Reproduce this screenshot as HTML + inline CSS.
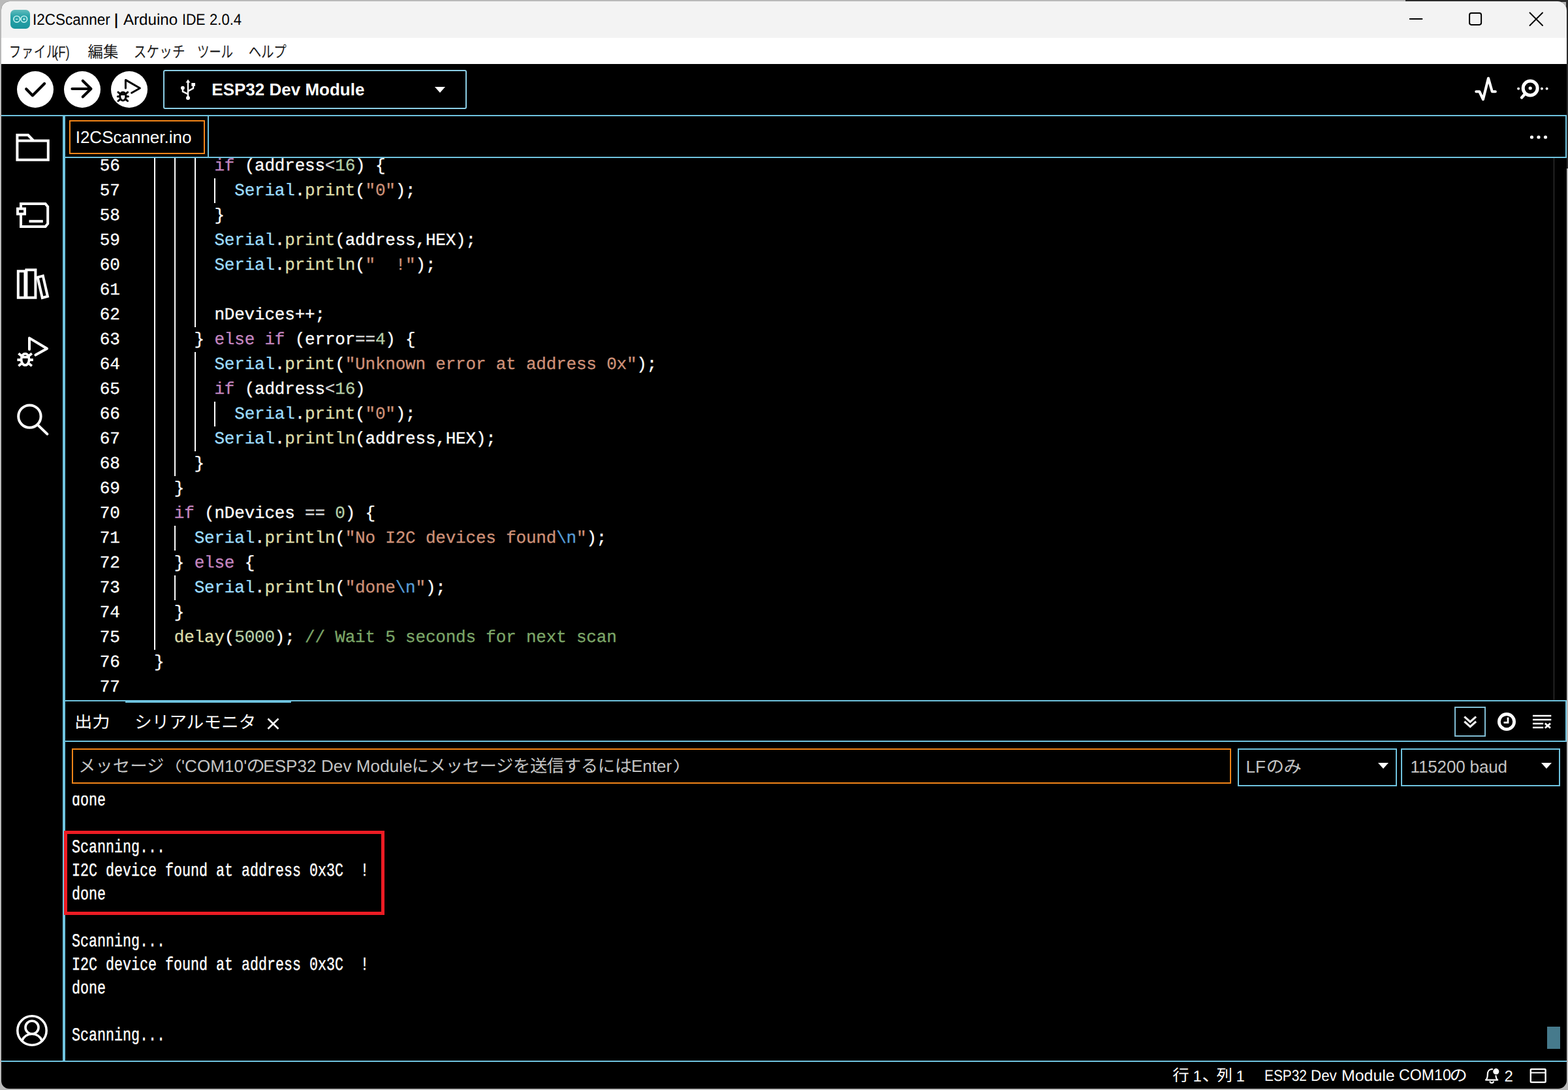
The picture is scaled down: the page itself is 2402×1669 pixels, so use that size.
<!DOCTYPE html>
<html lang="ja"><head><meta charset="utf-8"><title>I2CScanner | Arduino IDE 2.0.4</title>
<style>
html,body{margin:0;padding:0}
body{width:2402px;height:1669px;overflow:hidden;background:#b9b9b9;text-rendering:geometricPrecision;font-family:"Liberation Sans",sans-serif;position:relative}
#bgr{position:absolute;left:2153px;top:0;width:249px;height:3px;background:#2b2b2b}
#bgr2{position:absolute;left:2399px;top:0;width:3px;height:258px;background:#2b2b2b}
#win{position:absolute;left:2px;top:2px;width:2398px;height:1665px;border-radius:13px 14px 13px 12px;overflow:hidden;background:#000}
#in{position:absolute;left:-2px;top:-2px;width:2402px;height:1669px}
#in div,#in span.a,#in svg{position:absolute}
.b{background:#6FC3DF}
.t{white-space:pre;line-height:1}
svg{overflow:visible}
svg.jp text{font-family:"Liberation Sans","Noto Sans CJK JP",sans-serif;font-size:1000px}
#title{left:0;top:0;width:2402px;height:58px;background:#f3f3f3}
#menu{left:0;top:58px;width:2402px;height:40px;background:#fff}
#code{left:100px;top:242px;width:2298px;height:830px;overflow:hidden}
#code .ln,#code .cl{font-family:"Liberation Mono",monospace;font-size:26px;letter-spacing:-0.2px;-webkit-text-stroke:0.3px;line-height:38px;height:38px;white-space:pre;color:#fff}
#code .ln{left:0;width:83.6px;text-align:right}
#code .cl{left:136px}
#code .g{width:2px;background:#fff}
.k{color:#C586C0}.v{color:#9CDCFE}.f{color:#DCDCAA}.s{color:#CE9178}.n{color:#B5CEA8}.c{color:#7CA668}.e{color:#569CD6}.o{color:#D4D4D4}
#outp{left:100px;top:1218px;width:2290px;height:404px;overflow:hidden}
#outp pre{position:absolute;left:9.6px;top:-8.7px;-webkit-text-stroke:0.4px;margin:0;font-family:"Liberation Mono",monospace;font-size:28px;line-height:36px;color:#fff;transform:scaleX(0.7738);transform-origin:0 0}
</style></head>
<body>
<div id="bgr"></div><div id="bgr2"></div>
<div id="win"><div id="in">
<div id="title"></div>
<div id="menu"></div>
<svg style="left:16px;top:15px" width="30" height="29" viewBox="0 0 30 29"><defs><linearGradient id="ag" x1="0" y1="0" x2="0" y2="1"><stop offset="0" stop-color="#62bcbd"/><stop offset="0.35" stop-color="#2aa3a8"/><stop offset="1" stop-color="#1a959d"/></linearGradient></defs><rect width="30" height="29" rx="6.5" fill="url(#ag)"/><g fill="none" stroke="#c4f1f0" stroke-width="1.700"><circle cx="9.700" cy="14.300" r="4.800"/><circle cx="20.800" cy="14.300" r="4.800"/></g><path d="M8 14.300h3.400M19.100 14.300h3.400M20.800 12.600v3.400" stroke="#c4f1f0" stroke-width="1.300" fill="none"/></svg>
<span class="a t" style="left:49.73px;top:18.58px;font-size:24px;color:#000;font-weight:normal;transform:scaleX(0.9362);transform-origin:0 0">I2CScanner</span><span class="a t" style="left:174.14px;top:18.58px;font-size:24px;color:#000;font-weight:normal;transform:scaleX(1.2851);transform-origin:0 0">|</span><span class="a t" style="left:189.15px;top:18.58px;font-size:24px;color:#000;font-weight:normal;transform:scaleX(1.0041);transform-origin:0 0">Arduino</span><span class="a t" style="left:278.54px;top:18.58px;font-size:24px;color:#000;font-weight:normal;transform:scaleX(0.8868);transform-origin:0 0">IDE</span><span class="a t" style="left:320.89px;top:18.58px;font-size:24px;color:#000;font-weight:normal;transform:scaleX(0.9190);transform-origin:0 0">2.0.4</span>
<svg style="left:2140px;top:10px" width="240" height="40" viewBox="2140 10 240 40" fill="none" stroke="#000" stroke-width="2"><path d="M2159 28.900h20.200"/><rect x="2251.100" y="20.100" width="18" height="17.800" rx="2.800"/><path stroke-width="1.900" stroke-linecap="round" d="M2343.500 19.500l19.500 19.500M2363 19.500l-19.500 19.500"/></svg>
<svg class="jp" style="left:15px;top:67px;width:65px;height:24px" viewBox="60 -880 3427 1000" preserveAspectRatio="none"><text x="0" y="0" fill="#1b1b1b">ファイル</text></svg><svg class="jp" style="left:83.4px;top:67px;width:23.6px;height:24px" viewBox="92 -880 1044 1000" preserveAspectRatio="none"><text x="92" y="0" fill="#1b1b1b" textLength="1044" lengthAdjust="spacingAndGlyphs">(F)</text></svg><svg class="jp" style="left:135.2px;top:67px;width:46px;height:24px" viewBox="26 -880 1942 1000" preserveAspectRatio="none"><text x="0" y="0" fill="#1b1b1b">編集</text></svg><svg class="jp" style="left:206.3px;top:67px;width:69px;height:24px" viewBox="60 -880 3501 1000" preserveAspectRatio="none"><text x="0" y="0" fill="#1b1b1b">スケッチ</text></svg><svg class="jp" style="left:303.4px;top:67px;width:50px;height:24px" viewBox="60 -880 2723 1000" preserveAspectRatio="none"><text x="0" y="0" fill="#1b1b1b">ツール</text></svg><svg class="jp" style="left:381.5px;top:67px;width:55px;height:24px" viewBox="60 -880 2866 1000" preserveAspectRatio="none"><text x="0" y="0" fill="#1b1b1b">ヘルプ</text></svg>
<div style="left:26px;top:109px;width:56px;height:56px;border-radius:50%;background:#fff"></div>
<div style="left:98px;top:109px;width:56px;height:56px;border-radius:50%;background:#fff"></div>
<div style="left:170px;top:109px;width:56px;height:56px;border-radius:50%;background:#fff"></div>
<svg style="left:26px;top:109px" width="200" height="56" viewBox="26 109 200 56" fill="none" stroke="#000" stroke-width="4.2" stroke-linecap="round" stroke-linejoin="round"><path d="M40.2 136.2l9.7 10 18.2-18.2"/><path d="M110.5 136h28.6M126.8 123.8l12.6 12.2-12.6 12.2"/><g stroke-width="3"><path d="M192.4 135v-12.6l22 12.6-12.8 7.3"/><ellipse cx="188.3" cy="147.6" rx="4.6" ry="6.3"/><path d="M183.9 144.6h8.8M180.3 147.8h3.4M193 147.8h3.4M181 141.2l3.2 2.4M195.6 141.2l-3.2 2.4M181 154.6l3.2-2.6M195.6 154.6l-3.2-2.6"/></g></svg>
<div style="left:250px;top:107px;width:461px;height:56px;border:2px solid #8ccfe6;border-radius:3px;"></div>
<svg style="left:276px;top:118px" width="26" height="38" viewBox="276 118 26 38" fill="none" stroke="#fff" stroke-width="2.4" stroke-linejoin="round"><path d="M288 125V149M279.900 135V140.200L288 144.200M296.100 131V135.100L288 139.600"/><path d="M284.600 126.400L288 121.600 291.400 126.400z" fill="#fff" stroke="none"/><circle cx="288" cy="150.100" r="3" fill="#fff" stroke="none"/><circle cx="279.900" cy="134.600" r="2.900" fill="#fff" stroke="none"/><rect x="293.300" y="127" width="5.700" height="4.800" fill="#fff" stroke="none"/></svg>
<span class="a t" style="left:324.3px;top:123.99px;font-size:26px;color:#fff;font-family:'Liberation Sans',sans-serif;letter-spacing:0px;font-weight:bold;">ESP32 Dev Module</span>
<svg style="left:666px;top:133px" width="16" height="9" viewBox="0 0 16 9"><path d="M0 0h16l-8 9z" fill="#fff"/></svg>
<svg style="left:2255px;top:114px" width="125" height="44" viewBox="2255 114 125 44" fill="none" stroke="#fff" stroke-linecap="round" stroke-linejoin="round"><path stroke-width="4.100" d="M2261.300 140.200h5l5.600 12 8.100-32.400 5.800 20.400h5"/><circle cx="2344.2" cy="135" r="11" stroke-width="5"/><circle cx="2344.2" cy="135" r="2.6" fill="#fff" stroke="none"/><path stroke-width="4.400" d="M2335.4 144.600l-4.400 4.800"/><g fill="#fff" stroke="none"><circle cx="2326.100" cy="135.800" r="2"/><circle cx="2361.900" cy="135.800" r="2"/><circle cx="2369.600" cy="135.800" r="2"/></g></svg>
<div class="b" style="left:0px;top:176px;width:2402px;height:2px;"></div>
<div class="b" style="left:96px;top:178px;width:4px;height:1446px;"></div>
<div class="b" style="left:2398px;top:176px;width:2px;height:66px;"></div>
<div class="b" style="left:100px;top:240px;width:2300px;height:2px;"></div>
<div class="b" style="left:318px;top:178px;width:2px;height:62px;"></div>
<div style="left:106px;top:184px;width:204px;height:48px;border:2px solid #F38518;"></div>
<span class="a t" style="left:115.7px;top:196.99px;font-size:26px;color:#fff;font-family:'Liberation Sans',sans-serif;letter-spacing:0px;font-weight:normal;">I2CScanner.ino</span>
<svg style="left:2340px;top:204px" width="34" height="12" viewBox="2340 204 34 12" fill="#fff"><circle cx="2346.5" cy="210" r="2.6"/><circle cx="2357" cy="210" r="2.6"/><circle cx="2367.5" cy="210" r="2.6"/></svg>
<svg style="left:20px;top:200px" width="60" height="480" viewBox="20 200 60 480" fill="none" stroke="#fff" stroke-width="4" stroke-linejoin="miter"><path d="M26.4 215.5h47.4v29.2h-47.4zM26.4 217v-10.2h16.6l8.4 8.700"/><path d="M32 318v-6h37.5l3.700 4.500v26l-3.700 4.500h-37.500v-18"/><rect x="27" y="319.6" width="11" height="8"/><path d="M44.500 338.800h21.300"/><path d="M27.800 415.200h10.600v40.600h-10.600zM40.400 413.200h14v42.600h-14z"/><path d="M57.600 424.600l8.200-2.200 7.200 31.400-8.200 2.200z"/><path d="M45 535v-17.400l27 16.200-17.600 9.800" stroke-linejoin="round" stroke-linecap="round"/><g stroke-width="3.8" stroke-linecap="butt"><ellipse cx="38.600" cy="550.400" rx="6" ry="8.800"/><path d="M32.400 546.800h12.400M26.400 551h5M45.800 551h5M28.400 541.200l4.400 3.600M48.800 541.200l-4.400 3.600M28.400 560.400l4.400-3.600M48.800 560.400l-4.400-3.600"/></g><circle cx="45.400" cy="637.600" r="17.200"/><path d="M57.800 650.600l14.600 14" stroke-linecap="round"/></svg>
<svg style="left:22px;top:1551px" width="54" height="54" viewBox="22 1551 54 54" fill="none" stroke="#fff" stroke-width="3.6"><circle cx="49" cy="1578" r="22.200"/><circle cx="49" cy="1573.200" r="10"/><path d="M33.600 1593.400c3-6.600 9-10.200 15.400-10.200s12.400 3.600 15.400 10.200"/></svg>
<div id="code">
<div class="ln" style="top:-6.8px">56</div><div class="cl" style="top:-6.8px">      <span class="k">if</span> (address<span class="o">&lt;</span><span class="n">16</span>) {</div><div class="g" style="left:136.0px;top:-6.8px;height:38px"></div><div class="g" style="left:166.8px;top:-6.8px;height:38px"></div><div class="g" style="left:197.6px;top:-6.8px;height:38px"></div>
<div class="ln" style="top:31.2px">57</div><div class="cl" style="top:31.2px">        <span class="v">Serial</span>.<span class="f">print</span>(<span class="s">&quot;0&quot;</span>);</div><div class="g" style="left:136.0px;top:31.2px;height:38px"></div><div class="g" style="left:166.8px;top:31.2px;height:38px"></div><div class="g" style="left:197.6px;top:31.2px;height:38px"></div><div class="g" style="left:228.4px;top:31.2px;height:38px"></div>
<div class="ln" style="top:69.2px">58</div><div class="cl" style="top:69.2px">      }</div><div class="g" style="left:136.0px;top:69.2px;height:38px"></div><div class="g" style="left:166.8px;top:69.2px;height:38px"></div><div class="g" style="left:197.6px;top:69.2px;height:38px"></div>
<div class="ln" style="top:107.2px">59</div><div class="cl" style="top:107.2px">      <span class="v">Serial</span>.<span class="f">print</span>(address,HEX);</div><div class="g" style="left:136.0px;top:107.2px;height:38px"></div><div class="g" style="left:166.8px;top:107.2px;height:38px"></div><div class="g" style="left:197.6px;top:107.2px;height:38px"></div>
<div class="ln" style="top:145.2px">60</div><div class="cl" style="top:145.2px">      <span class="v">Serial</span>.<span class="f">println</span>(<span class="s">&quot;  !&quot;</span>);</div><div class="g" style="left:136.0px;top:145.2px;height:38px"></div><div class="g" style="left:166.8px;top:145.2px;height:38px"></div><div class="g" style="left:197.6px;top:145.2px;height:38px"></div>
<div class="ln" style="top:183.2px">61</div><div class="g" style="left:136.0px;top:183.2px;height:38px"></div><div class="g" style="left:166.8px;top:183.2px;height:38px"></div><div class="g" style="left:197.6px;top:183.2px;height:38px"></div>
<div class="ln" style="top:221.2px">62</div><div class="cl" style="top:221.2px">      nDevices++;</div><div class="g" style="left:136.0px;top:221.2px;height:38px"></div><div class="g" style="left:166.8px;top:221.2px;height:38px"></div><div class="g" style="left:197.6px;top:221.2px;height:38px"></div>
<div class="ln" style="top:259.2px">63</div><div class="cl" style="top:259.2px">    } <span class="k">else</span> <span class="k">if</span> (error<span class="o">==</span><span class="n">4</span>) {</div><div class="g" style="left:136.0px;top:259.2px;height:38px"></div><div class="g" style="left:166.8px;top:259.2px;height:38px"></div>
<div class="ln" style="top:297.2px">64</div><div class="cl" style="top:297.2px">      <span class="v">Serial</span>.<span class="f">print</span>(<span class="s">&quot;Unknown error at address 0x&quot;</span>);</div><div class="g" style="left:136.0px;top:297.2px;height:38px"></div><div class="g" style="left:166.8px;top:297.2px;height:38px"></div><div class="g" style="left:197.6px;top:297.2px;height:38px"></div>
<div class="ln" style="top:335.2px">65</div><div class="cl" style="top:335.2px">      <span class="k">if</span> (address<span class="o">&lt;</span><span class="n">16</span>)</div><div class="g" style="left:136.0px;top:335.2px;height:38px"></div><div class="g" style="left:166.8px;top:335.2px;height:38px"></div><div class="g" style="left:197.6px;top:335.2px;height:38px"></div>
<div class="ln" style="top:373.2px">66</div><div class="cl" style="top:373.2px">        <span class="v">Serial</span>.<span class="f">print</span>(<span class="s">&quot;0&quot;</span>);</div><div class="g" style="left:136.0px;top:373.2px;height:38px"></div><div class="g" style="left:166.8px;top:373.2px;height:38px"></div><div class="g" style="left:197.6px;top:373.2px;height:38px"></div><div class="g" style="left:228.4px;top:373.2px;height:38px"></div>
<div class="ln" style="top:411.2px">67</div><div class="cl" style="top:411.2px">      <span class="v">Serial</span>.<span class="f">println</span>(address,HEX);</div><div class="g" style="left:136.0px;top:411.2px;height:38px"></div><div class="g" style="left:166.8px;top:411.2px;height:38px"></div><div class="g" style="left:197.6px;top:411.2px;height:38px"></div>
<div class="ln" style="top:449.2px">68</div><div class="cl" style="top:449.2px">    }</div><div class="g" style="left:136.0px;top:449.2px;height:38px"></div><div class="g" style="left:166.8px;top:449.2px;height:38px"></div>
<div class="ln" style="top:487.2px">69</div><div class="cl" style="top:487.2px">  }</div><div class="g" style="left:136.0px;top:487.2px;height:38px"></div>
<div class="ln" style="top:525.2px">70</div><div class="cl" style="top:525.2px">  <span class="k">if</span> (nDevices <span class="o">==</span> <span class="n">0</span>) {</div><div class="g" style="left:136.0px;top:525.2px;height:38px"></div>
<div class="ln" style="top:563.2px">71</div><div class="cl" style="top:563.2px">    <span class="v">Serial</span>.<span class="f">println</span>(<span class="s">&quot;No I2C devices found</span><span class="e">\n</span><span class="s">&quot;</span>);</div><div class="g" style="left:136.0px;top:563.2px;height:38px"></div><div class="g" style="left:166.8px;top:563.2px;height:38px"></div>
<div class="ln" style="top:601.2px">72</div><div class="cl" style="top:601.2px">  } <span class="k">else</span> {</div><div class="g" style="left:136.0px;top:601.2px;height:38px"></div>
<div class="ln" style="top:639.2px">73</div><div class="cl" style="top:639.2px">    <span class="v">Serial</span>.<span class="f">println</span>(<span class="s">&quot;done</span><span class="e">\n</span><span class="s">&quot;</span>);</div><div class="g" style="left:136.0px;top:639.2px;height:38px"></div><div class="g" style="left:166.8px;top:639.2px;height:38px"></div>
<div class="ln" style="top:677.2px">74</div><div class="cl" style="top:677.2px">  }</div><div class="g" style="left:136.0px;top:677.2px;height:38px"></div>
<div class="ln" style="top:715.2px">75</div><div class="cl" style="top:715.2px">  <span class="f">delay</span>(<span class="n">5000</span>); <span class="c">// Wait 5 seconds for next scan</span></div><div class="g" style="left:136.0px;top:715.2px;height:38px"></div>
<div class="ln" style="top:753.2px">76</div><div class="cl" style="top:753.2px">}</div>
<div class="ln" style="top:791.2px">77</div>
</div>
<div class="" style="left:2380px;top:242px;width:1px;height:830px;background:#3c3c3c;"></div>
<div class="b" style="left:100px;top:1072px;width:2300px;height:2px;"></div>
<div class="b" style="left:192px;top:1072px;width:254px;height:4px;"></div>
<div class="b" style="left:100px;top:1134px;width:2300px;height:2px;"></div>
<div class="b" style="left:2398px;top:1072px;width:2px;height:64px;"></div>
<svg class="jp" style="left:117px;top:1093.3px;width:49px;height:24px" viewBox="113 -880 1794 1000" preserveAspectRatio="none"><text x="0" y="0" fill="#fff">出力</text></svg><svg class="jp" style="left:209.2px;top:1092px;width:180.3px;height:26px" viewBox="106 -880 6767 1000" preserveAspectRatio="none"><text x="0" y="0" fill="#fff">シリアルモニタ</text></svg><svg style="left:409px;top:1099px" width="19" height="18" viewBox="0 0 19 18" stroke="#fff" stroke-width="2.6" fill="none"><path d="M1.5 1.5l16 15.500M17.500 1.500l-16 15.500"/></svg>
<div style="left:2228px;top:1082px;width:44px;height:42px;border:2px solid #80bdd4;"></div>
<svg style="left:2240px;top:1090px" width="140" height="32" viewBox="2240 1090 140 32" fill="none" stroke="#fff"><path stroke="#ececec" stroke-width="3.2" d="M2243.300 1097.400l8.900 7.900 8.900-7.900M2243.300 1104.700l8.900 7.900 8.900-7.900"/><circle cx="2308" cy="1105.100" r="11.600" stroke-width="4.800"/><path stroke-width="2.800" d="M2310 1098.400v8h-6.500"/><path stroke-width="2.400" d="M2348 1096h28.300M2348 1102h28.300M2348 1108h16.200M2348 1114h16.200"/><path stroke-width="2.800" d="M2366.800 1107.600l8.200 7.200M2375 1107.600l-8.200 7.200"/></svg>
<div style="left:110px;top:1146px;width:1772px;height:50px;border:2px solid #F38518;"></div>
<svg class="jp" style="left:123.3px;top:1158.8px;width:127.4px;height:26px" viewBox="114 -880 4829 1000" preserveAspectRatio="none"><text x="0" y="0" fill="#c4c4c4">メッセージ</text></svg><svg class="jp" style="left:269.5px;top:1163.2px;width:7.0px;height:20.4px" viewBox="695 -856 259 952" preserveAspectRatio="none"><text x="0" y="0" fill="#c4c4c4">（</text></svg><span class="a t" style="left:278px;top:1159.99px;font-size:26px;color:#c4c4c4;font-family:'Liberation Sans',sans-serif;letter-spacing:0.1px;font-weight:normal;">&#x27;COM10&#x27;</span>
<svg class="jp" style="left:379.6px;top:1158.8px;width:23px;height:26px" viewBox="88 -880 820 1000" preserveAspectRatio="none"><text x="0" y="0" fill="#c4c4c4">の</text></svg><span class="a t" style="left:403.2px;top:1159.99px;font-size:26px;color:#c4c4c4;font-family:'Liberation Sans',sans-serif;letter-spacing:0.1px;font-weight:normal;">ESP32 Dev Module</span>
<svg class="jp" style="left:634.2px;top:1158.8px;width:332.8px;height:26px" viewBox="124 -880 12826 1000" preserveAspectRatio="none"><text x="0" y="0" fill="#c4c4c4">にメッセージを送信するには</text></svg><span class="a t" style="left:967px;top:1159.99px;font-size:26px;color:#c4c4c4;font-family:'Liberation Sans',sans-serif;letter-spacing:0px;font-weight:normal;">Enter</span>
<svg class="jp" style="left:1032px;top:1163.2px;width:7.5px;height:20.4px" viewBox="46 -856 259 952" preserveAspectRatio="none"><text x="0" y="0" fill="#c4c4c4">）</text></svg><div style="left:1896px;top:1146px;width:240px;height:54px;border:2px solid #6FC3DF;"></div>
<div style="left:2146px;top:1146px;width:240px;height:54px;border:2px solid #6FC3DF;"></div>
<span class="a t" style="left:1908.6px;top:1160.59px;font-size:26px;color:#c4c4c4;font-family:'Liberation Sans',sans-serif;letter-spacing:0px;font-weight:normal;">LF</span>
<svg class="jp" style="left:1941.5px;top:1160px;width:50px;height:26px" viewBox="88 -880 1860 1000" preserveAspectRatio="none"><text x="0" y="0" fill="#c4c4c4">のみ</text></svg><span class="a t" style="left:2160.6px;top:1160.59px;font-size:26px;color:#c4c4c4;font-family:'Liberation Sans',sans-serif;letter-spacing:-0.15px;font-weight:normal;">115200 baud</span>
<svg style="left:2111px;top:1168px" width="16" height="9" viewBox="0 0 16 9"><path d="M0 0h16l-8 9z" fill="#fff"/></svg>
<svg style="left:2361px;top:1168px" width="16" height="9" viewBox="0 0 16 9"><path d="M0 0h16l-8 9z" fill="#fff"/></svg>
<div id="outp"><pre>done

Scanning...
I2C device found at address 0x3C  !
done

Scanning...
I2C device found at address 0x3C  !
done

Scanning...</pre></div>
<div style="left:98px;top:1272px;width:481px;height:119px;border:5px solid #EC1C24;"></div>
<div class="" style="left:2370px;top:1572px;width:20px;height:34px;background:#467a8c;"></div>
<div class="b" style="left:0px;top:1624px;width:2402px;height:2px;"></div>
<svg class="jp" style="left:1796.8px;top:1634px;width:23.8px;height:24px" viewBox="25 -880 930 1000" preserveAspectRatio="none"><text x="0" y="0" fill="#fff">行</text></svg><span class="a t" style="left:1827.5px;top:1636.68px;font-size:24px;color:#fff;font-family:'Liberation Sans',sans-serif;letter-spacing:0px;font-weight:normal;">1</span>
<svg class="jp" style="left:1842.5px;top:1634px;width:8px;height:24px" viewBox="52 -880 289 1000" preserveAspectRatio="none"><text x="0" y="0" fill="#fff">、</text></svg><svg class="jp" style="left:1864px;top:1634px;width:21.6px;height:24px" viewBox="22 -880 892 1000" preserveAspectRatio="none"><text x="0" y="0" fill="#fff">列</text></svg><span class="a t" style="left:1893.5px;top:1636.68px;font-size:24px;color:#fff;font-family:'Liberation Sans',sans-serif;letter-spacing:0px;font-weight:normal;">1</span>
<span class="a t" style="left:1936.79px;top:1636.28px;font-size:24px;color:#fff;font-weight:normal;transform:scaleX(0.8694);transform-origin:0 0">ESP32</span><span class="a t" style="left:2007.97px;top:1636.28px;font-size:24px;color:#fff;font-weight:normal;transform:scaleX(0.9304);transform-origin:0 0">Dev</span><span class="a t" style="left:2054.86px;top:1636.28px;font-size:24px;color:#fff;font-weight:normal;transform:scaleX(1.0373);transform-origin:0 0">Module</span>
<span class="a t" style="left:2143.02px;top:1634.68px;font-size:24px;color:#fff;font-weight:normal;transform:scaleX(0.9648);transform-origin:0 0">COM10</span>
<svg class="jp" style="left:2223px;top:1633.5px;width:22.5px;height:24px" viewBox="88 -880 820 1000" preserveAspectRatio="none"><text x="0" y="0" fill="#fff">の</text></svg><svg style="left:2270px;top:1632px" width="104" height="30" viewBox="2270 1632 104 30" fill="none" stroke="#fff" stroke-width="2.2"><path d="M2276 1653.600c2.400-1.800 2.800-4 2.800-8.400 0-5 2.600-8 6.300-8s6.300 3 6.300 8c0 4.400 0.400 6.600 2.800 8.400zM2282.500 1655.400a2.700 2.700 0 0 0 5.400 0" stroke-linejoin="round"/><circle cx="2291.800" cy="1640.700" r="5.200" fill="#fff" stroke="#000" stroke-width="1.200"/><rect x="2344.800" y="1637.100" width="22.800" height="20" rx="1" stroke-width="2.400"/><path d="M2344.800 1642.500h22.800" stroke-width="2.200"/></svg>
<span class="a t" style="left:2304.6px;top:1636.88px;font-size:24px;color:#fff;font-family:'Liberation Sans',sans-serif;letter-spacing:0px;font-weight:normal;">2</span>
</div></div>
</body></html>
